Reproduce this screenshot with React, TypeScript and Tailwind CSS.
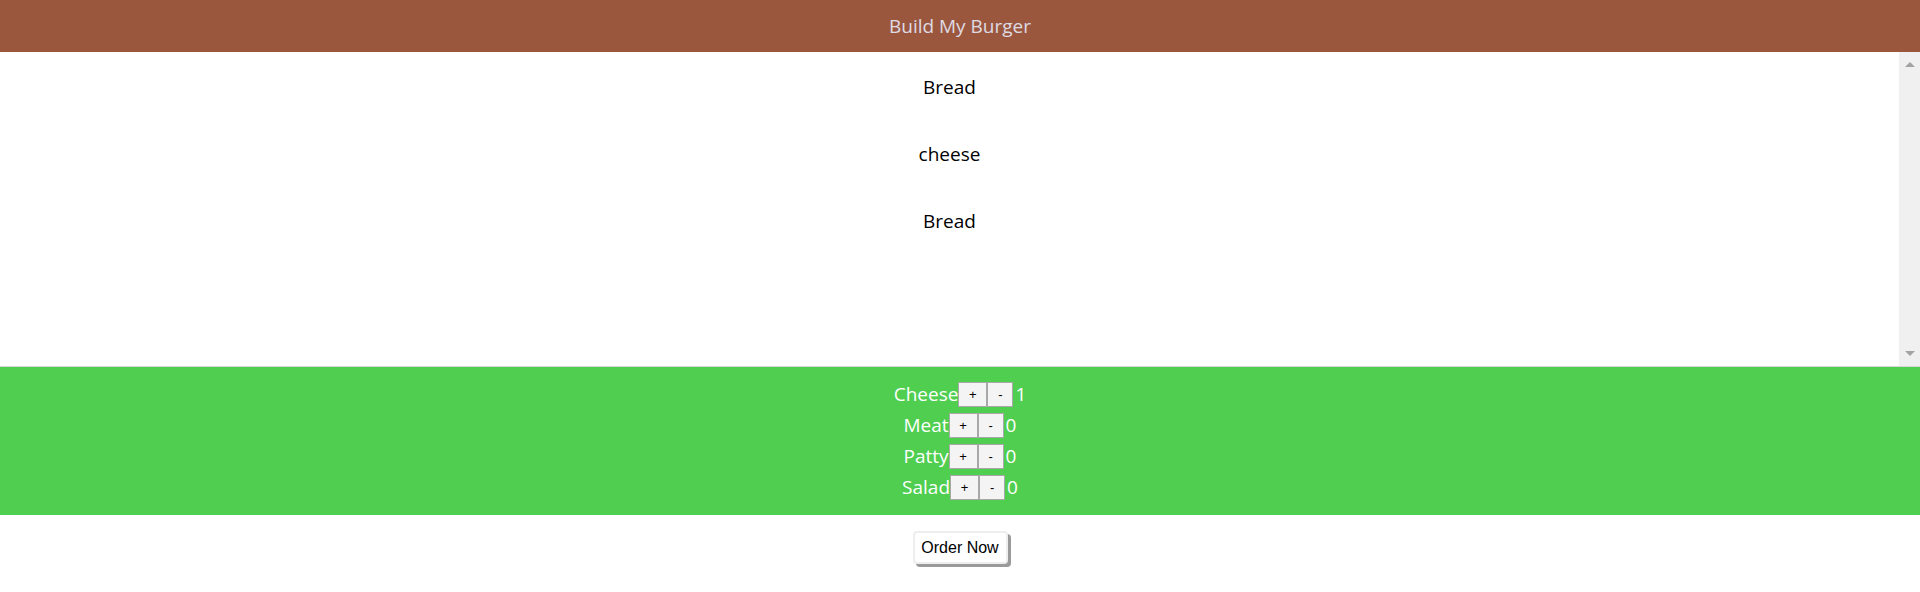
import { useState } from 'react'

// Build My Burger — preview of the layers, ingredient controls and order button.

type Ingredient = 'cheese' | 'meat' | 'patty' | 'salad'

const CONTROLS: { key: Ingredient; label: string }[] = [
  { key: 'cheese', label: 'Cheese' },
  { key: 'meat', label: 'Meat' },
  { key: 'patty', label: 'Patty' },
  { key: 'salad', label: 'Salad' },
]

const FONT = "font-['Open_Sans','Noto_Sans',sans-serif]"

export default function App() {
  const [counts, setCounts] = useState<Record<Ingredient, number>>({
    cheese: 1,
    meat: 0,
    patty: 0,
    salad: 0,
  })

  const change = (key: Ingredient, delta: number) =>
    setCounts((c) => ({ ...c, [key]: Math.max(0, c[key] + delta) }))

  // layers between the two breads
  const layers: string[] = []
  CONTROLS.forEach(({ key }) => {
    for (let i = 0; i < counts[key]; i++) layers.push(key)
  })

  return (
    <div className={`flex h-[592px] w-full flex-col bg-white ${FONT}`}>
      {/* Header */}
      <header className="flex h-[52px] shrink-0 items-center justify-center bg-[#9b573d] text-[19px] text-[#dedbe4]">
        Build My Burger
      </header>

      {/* Burger preview */}
      <section className="flex h-[315px] shrink-0 border-b border-[#d6d6d6]">
        <div className="flex flex-1 flex-col items-center gap-[40px] pt-[22px] text-[19px] text-black">
          <p className="h-[27px] leading-[27px]">Bread</p>
          {layers.map((name, i) => (
            <p key={i} className="h-[27px] leading-[27px]">
              {name}
            </p>
          ))}
          <p className="h-[27px] leading-[27px]">Bread</p>
        </div>
        <div className="flex w-[21px] flex-col items-center justify-between bg-[#f0f0f0] py-[10px]">
          <span className="h-0 w-0 border-x-[5px] border-b-[5px] border-x-transparent border-b-[#a3a3a3]" />
          <span className="h-0 w-0 border-x-[5px] border-t-[5px] border-x-transparent border-t-[#a3a3a3]" />
        </div>
      </section>

      {/* Controls */}
      <section className="flex h-[148px] shrink-0 flex-col items-center bg-[#4fce50] py-[12px] text-[19px] text-white">
        {CONTROLS.map(({ key, label }) => (
          <div key={key} className="flex h-[31px] items-center">
            <span>{label}</span>
            <button
              type="button"
              onClick={() => change(key, 1)}
              className="h-[25px] w-[29px] border border-[#a8a8a8] bg-[#f4f4f4] font-['Liberation_Sans',sans-serif] text-[13px] text-black"
            >
              +
            </button>
            <button
              type="button"
              onClick={() => change(key, -1)}
              className="h-[25px] w-[26px] border border-[#a8a8a8] bg-[#f4f4f4] font-['Liberation_Sans',sans-serif] text-[13px] text-black"
            >
              -
            </button>
            <span className="ml-[2px]">{counts[key]}</span>
          </div>
        ))}
      </section>

      {/* Order */}
      <div className="flex justify-center pt-[16px]">
        <button
          type="button"
          className="h-[33px] w-[95px] rounded-[4px] border-2 border-[#eeeeee] bg-white font-['Liberation_Sans',sans-serif] text-[16px] text-black shadow-[3px_3px_0_#9a9a9a]"
        >
          Order Now
        </button>
      </div>
    </div>
  )
}
